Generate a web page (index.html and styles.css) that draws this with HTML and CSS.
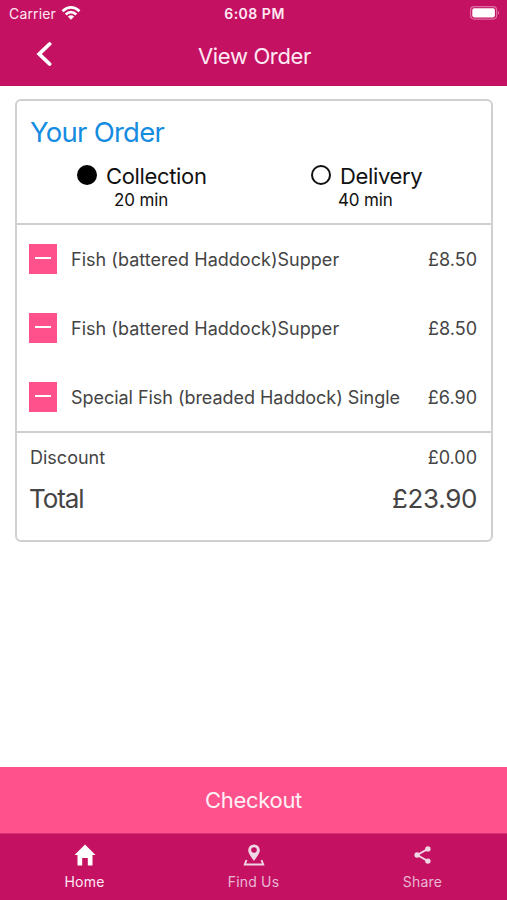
FILE: index.html
```html
<!DOCTYPE html>
<html lang="en">
<head>
<meta charset="utf-8">
<title>View Order</title>
<link rel="stylesheet" href="styles.css">
</head>
<body>
<header class="header">
  <div class="status">
    <div class="status-left"><span class="carrier">Carrier</span>
      <svg class="wifi" width="20" height="16" viewBox="0 0 20 16" fill="none" stroke="#fff" stroke-width="2.700"><path d="M1.500 6.200Q10-1.400 18.500 6.200M4.700 9.600Q10 4.800 15.300 9.600"/><path d="M10 14.800L6.800 11.500Q10 8.900 13.200 11.500Z" fill="#fff" stroke="none"/></svg>
    </div>
    <span class="clock">6:08 PM</span>
    <svg class="battery" width="30" height="14" viewBox="0 0 30 14"><rect x=".6" y=".6" width="26" height="12.500" rx="3.500" fill="none" stroke="#dc6ea2" stroke-width="1.200"/><rect x="2.300" y="2.300" width="22.600" height="9.100" rx="1.800" fill="#fff"/><path d="M28 4.800Q30.200 6.800 28 8.800Z" fill="#e07fb0"/></svg>
  </div>
  <div class="nav">
    <svg class="back" width="16" height="26" viewBox="0 0 16 26" fill="none" stroke="#fff" stroke-width="3.800" stroke-linecap="round"><path d="M13.600 3L3.200 13L13.600 23"/></svg>
    <h1 class="nav-title">View Order</h1>
  </div>
</header>
<main class="content">
  <section class="card">
    <div class="card-head">
      <h2 class="card-title">Your Order</h2>
      <div class="options">
        <div class="option"><div class="option-row"><i class="radio radio-on"></i><span class="option-name">Collection</span></div><span class="time">20 min</span></div>
        <div class="option"><div class="option-row"><i class="radio"></i><span class="option-name">Delivery</span></div><span class="time">40 min</span></div>
      </div>
    </div>
    <div class="items">
      <div class="item"><button class="minus" aria-label="Remove"></button><span class="name supper">Fish (battered Haddock)Supper</span><span class="price">£8.50</span></div>
      <div class="item"><button class="minus" aria-label="Remove"></button><span class="name supper">Fish (battered Haddock)Supper</span><span class="price">£8.50</span></div>
      <div class="item"><button class="minus" aria-label="Remove"></button><span class="name">Special Fish (breaded Haddock) Single</span><span class="price">£6.90</span></div>
    </div>
    <div class="totals">
      <div class="discount"><span>Discount</span><span class="price">£0.00</span></div>
      <div class="total"><span class="total-label">Total</span><span class="total-price">£23.90</span></div>
    </div>
  </section>
</main>
<button class="checkout"><span>Checkout</span></button>
<nav class="tabs">
  <a class="tab active"><svg width="24" height="24" viewBox="0 0 24 24" fill="currentColor"><path d="M12 1.500L22.500 12H19.500V22.500H14.800V15H9.200V22.500H4.500V12H1.500Z"/></svg><span class="home">Home</span></a>
  <a class="tab"><svg width="24" height="24" viewBox="0 0 24 24" fill="none" stroke="currentColor" stroke-width="1.900"><path d="M12 18C9.500 14 6.200 10.600 6.200 7.200A5.800 5.800 0 0 1 17.800 7.200C17.800 10.600 14.500 14 12 18ZM12 4.200A2.800 2.800 0 1 0 12 9.800A2.800 2.800 0 1 0 12 4.200Z" fill="currentColor" fill-rule="evenodd" stroke="none"/><path d="M4.500 17L2.800 21.500H21.200L19.500 17"/></svg><span class="find">Find Us</span></a>
  <a class="tab"><svg width="24" height="24" viewBox="0 0 24 24" fill="currentColor"><path d="M16.900 5.900L6.300 12L16.900 18.100" fill="none" stroke="currentColor" stroke-width="1.800"/><circle cx="16.900" cy="5.900" r="2.700"/><circle cx="6.100" cy="12" r="2.700"/><circle cx="16.900" cy="18.100" r="2.700"/></svg><span class="share">Share</span></a>
</nav>
</body>
</html>
```

FILE: styles.css
```css
* { box-sizing: border-box; }
body { margin: 0; width: 507px; height: 900px; display: flex; flex-direction: column; background: #fff; font-family: Inter, "Liberation Sans", sans-serif; color: #444; overflow: hidden; }
h1, h2 { margin: 0; font-weight: 400; }
button { border: 0; padding: 0; font: inherit; }
svg { display: block; }
span, h1, h2 { white-space: nowrap; }
.header { height: 86px; background: #c51162; color: #ffe9f4; }
.status { height: 28px; display: grid; grid-template-columns: 1fr auto 1fr; align-items: center; padding: 0 7px 1px 9px; }
.status-left { display: flex; align-items: center; gap: 5px; }
.carrier { font-size: 14px; letter-spacing: .15px; }
.wifi { margin-top: -1px; }
.clock { font-size: 14px; font-weight: 600; letter-spacing: .5px; }
.battery { justify-self: end; margin-top: -1px; }
.nav { height: 58px; display: grid; grid-template-columns: 1fr auto 1fr; align-items: center; padding-left: 36px; padding-right: 34px; }
.back { margin-top: -6px; }
.nav-title { font-size: 22px; line-height: 28px; letter-spacing: -.35px; margin-top: -2px; }
.content { flex: 1; padding: 13px 14px 0 15px; }
.card { height: 443px; border: 2px solid #d0d0d0; border-radius: 6px; }
.card-head { height: 124px; border-bottom: 2px solid #d0d0d0; padding: 14px 0 0 13px; }
.card-title { font-size: 27.5px; line-height: 34px; letter-spacing: -.75px; color: #168ce0; }
.options { display: flex; color: #111; padding-top: 13px; }
.option { flex: none; width: 234px; padding-left: 47px; }
.option:last-child { width: 228px; padding-left: 47px; }
.option-row { display: flex; align-items: center; gap: 9px; height: 28px; }
.radio { width: 20px; height: 20px; border: 2px solid #111; border-radius: 50%; margin-top: -3px; }
.radio-on { background: #000; border-color: #000; }
.option-name { font-size: 22px; letter-spacing: -.35px; }
.time { display: block; font-size: 17px; line-height: 20px; margin-left: 37px; letter-spacing: -.15px; }
.option:last-child .time { margin-left: 27px; }
.items { height: 208px; border-bottom: 2px solid #d0d0d0; }
.item { height: 69px; display: flex; align-items: center; padding: 0 14px 0 12px; }
.minus { width: 28px; height: 30px; background: #ff528d; display: grid; justify-items: center; padding-top: 13px; margin: -1px 14px 0 0; align-content: start; }
.minus::before { content: ""; width: 16px; height: 2px; background: #fff; }
.name { flex: 1; font-size: 18px; letter-spacing: -.04px; }
.supper { letter-spacing: .03px; }
.price { font-size: 18px; }
.totals { padding: 9px 14px 0 13px; }
.discount, .total { display: flex; justify-content: space-between; align-items: center; }
.discount { height: 30px; font-size: 18px; }
.total { height: 53px; font-size: 26px; }
.total-label { letter-spacing: -1.1px; margin-left: -1px; }
.total-price { letter-spacing: -.35px; }
.checkout { height: 67px; background: #ff528d; color: #fff0f6; font-size: 22px; letter-spacing: -.3px; border-bottom: 1px solid #d93078; }
.tabs { height: 66px; display: grid; grid-template-columns: 169px 169px 169px; background: #c51162; color: #e8b8d5; }
.tab { display: flex; flex-direction: column; align-items: center; padding-top: 9px; font-size: 14px; line-height: 20px; gap: 5px; }
.tab svg { color: #efd6e4; }
.active { color: #ffe9f4; }
.home { letter-spacing: .2px; }
.find { letter-spacing: .2px; }
.share { letter-spacing: .2px; }
.active svg { color: #fff; }
.options .option + .option { margin-left: 0; }
.option:first-child { width: 234px; }
```
